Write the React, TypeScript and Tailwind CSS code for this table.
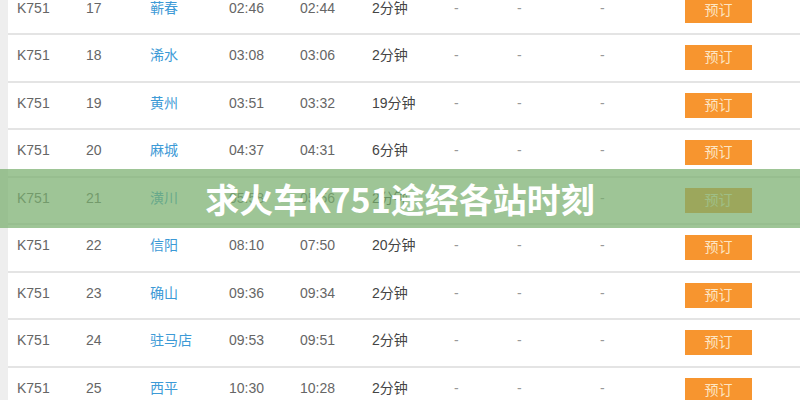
import React from "react";

const rows = [
  ["17", "蕲春", "02:46", "02:44", "2分钟"],
  ["18", "浠水", "03:08", "03:06", "2分钟"],
  ["19", "黄州", "03:51", "03:32", "19分钟"],
  ["20", "麻城", "04:37", "04:31", "6分钟"],
  ["21", "潢川", "05:58", "05:56", "2分钟"],
  ["22", "信阳", "08:10", "07:50", "20分钟"],
  ["23", "确山", "09:36", "09:34", "2分钟"],
  ["24", "驻马店", "09:53", "09:51", "2分钟"],
  ["25", "西平", "10:30", "10:28", "2分钟"],
];

export default function App() {
  return (
    <div
      className="relative w-[800px] h-[400px] overflow-hidden bg-white flex"
      style={{ fontFamily: '"Liberation Sans", "Noto Sans CJK SC", sans-serif' }}
    >
      <div className="w-[8px] shrink-0 bg-[#eeeeee]" />
      <div className="flex-1 flex flex-col -mt-[12.5px]">
        {rows.map((r) => (
          <div
            key={r[0]}
            className="h-[47.5px] shrink-0 flex items-center border-b-2 border-[#e4e4e4] text-[14px] text-[#666]"
          >
            <span className="w-[78px] pl-[9px] mb-[4px]">K751</span>
            <span className="w-[64px] mb-[4px]">{r[0]}</span>
            <span className="w-[79px] text-[#3d9ad6] mb-[4px]">{r[1]}</span>
            <span className="w-[71px] mb-[4px]">{r[2]}</span>
            <span className="w-[72px] mb-[4px]">{r[3]}</span>
            <span className="w-[82px] text-[#444] mb-[4px]">{r[4]}</span>
            <span className="w-[63px] text-[#999] mb-[4px]">-</span>
            <span className="w-[83px] text-[#999] mb-[4px]">-</span>
            <span className="w-[85px] text-[#999] mb-[4px]">-</span>
            <div className="w-[67px] h-[25px] bg-[#f7952f] flex items-center justify-center text-[14px] text-[#fde6c4]">
              预订
            </div>
          </div>
        ))}
      </div>
      <div className="absolute left-0 right-0 top-[169px] h-[59px] bg-[rgba(120,175,110,0.72)] flex items-center justify-center">
        <span
          className="text-white font-bold text-[34px] leading-none"
          style={{ fontFamily: '"Noto Sans CJK SC", "Noto Sans", sans-serif' }}
        >
          求火车K751途经各站时刻
        </span>
      </div>
    </div>
  );
}
